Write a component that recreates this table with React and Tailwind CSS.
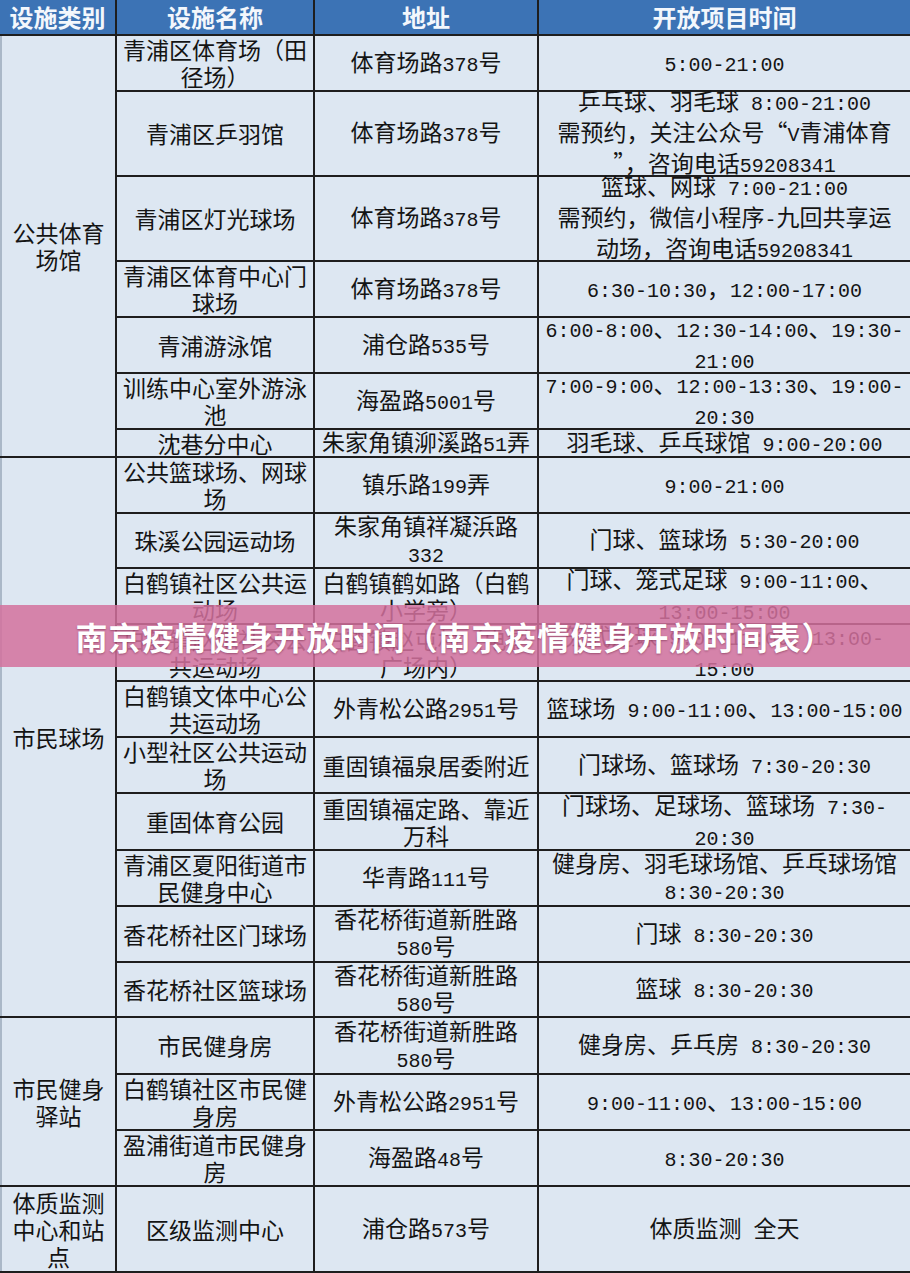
import React from "react";

const groups = [
  {
    label: ["公共体育", "场馆"],
    span: "row-span-7",
    rows: [
      [["青浦区体育场（田", "径场）"], ["体育场路378号"], ["5:00-21:00"]],
      [["青浦区乒羽馆"], ["体育场路378号"], ["乒乓球、羽毛球 8:00-21:00", "需预约，关注公众号“V青浦体育", "”，咨询电话59208341"]],
      [["青浦区灯光球场"], ["体育场路378号"], ["篮球、网球 7:00-21:00", "需预约，微信小程序-九回共享运", "动场，咨询电话59208341"]],
      [["青浦区体育中心门", "球场"], ["体育场路378号"], ["6:30-10:30，12:00-17:00"]],
      [["青浦游泳馆"], ["浦仓路535号"], ["6:00-8:00、12:30-14:00、19:30-", "21:00"]],
      [["训练中心室外游泳", "池"], ["海盈路5001号"], ["7:00-9:00、12:00-13:30、19:00-", "20:30"]],
      [["沈巷分中心"], ["朱家角镇泖溪路51弄"], ["羽毛球、乒乓球馆 9:00-20:00"]],
    ],
  },
  {
    label: ["市民球场"],
    span: "row-span-10",
    rows: [
      [["公共篮球场、网球", "场"], ["镇乐路199弄"], ["9:00-21:00"]],
      [["珠溪公园运动场"], ["朱家角镇祥凝浜路", "332"], ["门球、篮球场 5:30-20:00"]],
      [["白鹤镇社区公共运", "动场"], ["白鹤镇鹤如路（白鹤", "小学旁）"], ["门球、笼式足球 9:00-11:00、", "13:00-15:00"]],
      [["白鹤镇赵屯社区公", "共运动场"], ["白鹤镇赵屯村（电影", "广场内）"], ["笼式足球 9:00-11:00、13:00-", "15:00"]],
      [["白鹤镇文体中心公", "共运动场"], ["外青松公路2951号"], ["篮球场 9:00-11:00、13:00-15:00"]],
      [["小型社区公共运动", "场"], ["重固镇福泉居委附近"], ["门球场、篮球场 7:30-20:30"]],
      [["重固体育公园"], ["重固镇福定路、靠近", "万科"], ["门球场、足球场、篮球场 7:30-", "20:30"]],
      [["青浦区夏阳街道市", "民健身中心"], ["华青路111号"], ["健身房、羽毛球场馆、乒乓球场馆", "8:30-20:30"]],
      [["香花桥社区门球场"], ["香花桥街道新胜路", "580号"], ["门球 8:30-20:30"]],
      [["香花桥社区篮球场"], ["香花桥街道新胜路", "580号"], ["篮球 8:30-20:30"]],
    ],
  },
  {
    label: ["市民健身", "驿站"],
    span: "row-span-3",
    rows: [
      [["市民健身房"], ["香花桥街道新胜路", "580号"], ["健身房、乒乓房 8:30-20:30"]],
      [["白鹤镇社区市民健", "身房"], ["外青松公路2951号"], ["9:00-11:00、13:00-15:00"]],
      [["盈浦街道市民健身", "房"], ["海盈路48号"], ["8:30-20:30"]],
    ],
  },
  {
    label: ["体质监测", "中心和站", "点"],
    span: "row-span-1",
    rows: [[["区级监测中心"], ["浦仓路573号"], ["体质监测 全天"]]],
  },
];

function Line({ s }) {
  const parts = s.split(/([\x20-\x7e]+)/).filter((p) => p !== "");
  return (
    <div className="whitespace-pre leading-[27px]">
      {parts.map((p, i) =>
        /^[\x20-\x7e]+$/.test(p) ? (
          <span key={i} className="font-['Liberation_Mono',monospace] text-[20px]">
            {p}
          </span>
        ) : (
          <span key={i}>{p}</span>
        )
      )}
    </div>
  );
}

function Cell({ lines, extra = "" }) {
  return (
    <div className={`bg-[#dde7f2] flex flex-col items-center justify-center text-center text-[#141414] ${extra}`}>
      {lines.map((l, i) => (
        <Line key={i} s={l} />
      ))}
    </div>
  );
}

export default function App() {
  return (
    <div className="relative w-[910px] h-[1273px] bg-[#1e1e1e] pb-[2px] font-['Noto_Sans_CJK_SC',sans-serif] text-[23px] overflow-hidden">
      <div className="grid grid-cols-[115px_196px_222px_371px] grid-rows-[34px_54px_83px_83px_54px_54px_54px_26px_54px_53px_54px_55px_54px_54px_55px_54px_54px_53px_55px_54px_54px_84px] gap-[2px]">
        {["设施类别", "设施名称", "地址", "开放项目时间"].map((h) => (
          <div
            key={h}
            className="bg-[#3c73b5] flex items-center justify-center text-[#f3f7fc] font-bold text-[24px] leading-none"
          >
            {h}
          </div>
        ))}
        {groups.map((g, gi) => (
          <React.Fragment key={gi}>
            <Cell lines={g.label} extra={`${g.span} border-l-2 border-[#aab8c8]`} />
            {g.rows.map((r, ri) => (
              <React.Fragment key={ri}>
                <Cell lines={r[0]} />
                <Cell lines={r[1]} />
                <Cell lines={r[2]} />
              </React.Fragment>
            ))}
          </React.Fragment>
        ))}
      </div>
      <div className="absolute left-0 right-0 top-[605px] h-[62px] bg-[#d4719d]/85 flex items-center justify-center">
        <span className="text-white font-bold text-[32px] tracking-[1px] whitespace-nowrap [text-shadow:0_1px_2px_rgba(90,20,50,0.45)]">
          南京疫情健身开放时间（南京疫情健身开放时间表）
        </span>
      </div>
    </div>
  );
}
